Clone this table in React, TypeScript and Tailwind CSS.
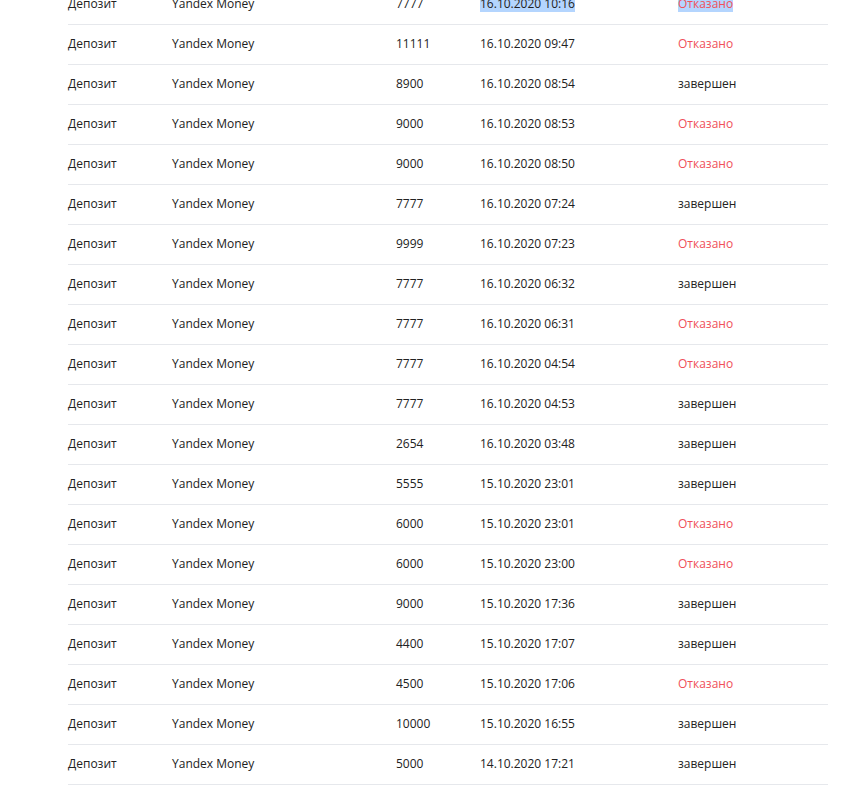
const rows: [string, string, string, boolean][] = [
  ["7777", "16.10.2020 10:16", "Отказано", true],
  ["11111", "16.10.2020 09:47", "Отказано", true],
  ["8900", "16.10.2020 08:54", "завершен", false],
  ["9000", "16.10.2020 08:53", "Отказано", true],
  ["9000", "16.10.2020 08:50", "Отказано", true],
  ["7777", "16.10.2020 07:24", "завершен", false],
  ["9999", "16.10.2020 07:23", "Отказано", true],
  ["7777", "16.10.2020 06:32", "завершен", false],
  ["7777", "16.10.2020 06:31", "Отказано", true],
  ["7777", "16.10.2020 04:54", "Отказано", true],
  ["7777", "16.10.2020 04:53", "завершен", false],
  ["2654", "16.10.2020 03:48", "завершен", false],
  ["5555", "15.10.2020 23:01", "завершен", false],
  ["6000", "15.10.2020 23:01", "Отказано", true],
  ["6000", "15.10.2020 23:00", "Отказано", true],
  ["9000", "15.10.2020 17:36", "завершен", false],
  ["4400", "15.10.2020 17:07", "завершен", false],
  ["4500", "15.10.2020 17:06", "Отказано", true],
  ["10000", "15.10.2020 16:55", "завершен", false],
  ["5000", "14.10.2020 17:21", "завершен", false],
];

export default function App() {
  return (
    <div className="min-h-[808px] bg-white font-['Open_Sans',sans-serif] text-[12px] text-[#222]">
      <div className="ml-[68px] w-[760px] -mt-[15px]">
        {rows.map(([amount, date, status, refused], i) => (
          <div
            key={i}
            className="grid h-[40px] grid-cols-[104px_224px_84px_198px_1fr] items-center border-b border-[#e6e8ec] pb-[2px]"
          >
            <span>Депозит</span>
            <span>Yandex Money</span>
            <span>{amount}</span>
            <span>
              <span className={i === 0 ? "bg-[#b4d5fe]" : ""}>{date}</span>
            </span>
            <span className={refused ? "text-[#f0505a]" : ""}>
              <span className={i === 0 ? "bg-[#b4d5fe]" : ""}>{status}</span>
            </span>
          </div>
        ))}
      </div>
    </div>
  );
}
